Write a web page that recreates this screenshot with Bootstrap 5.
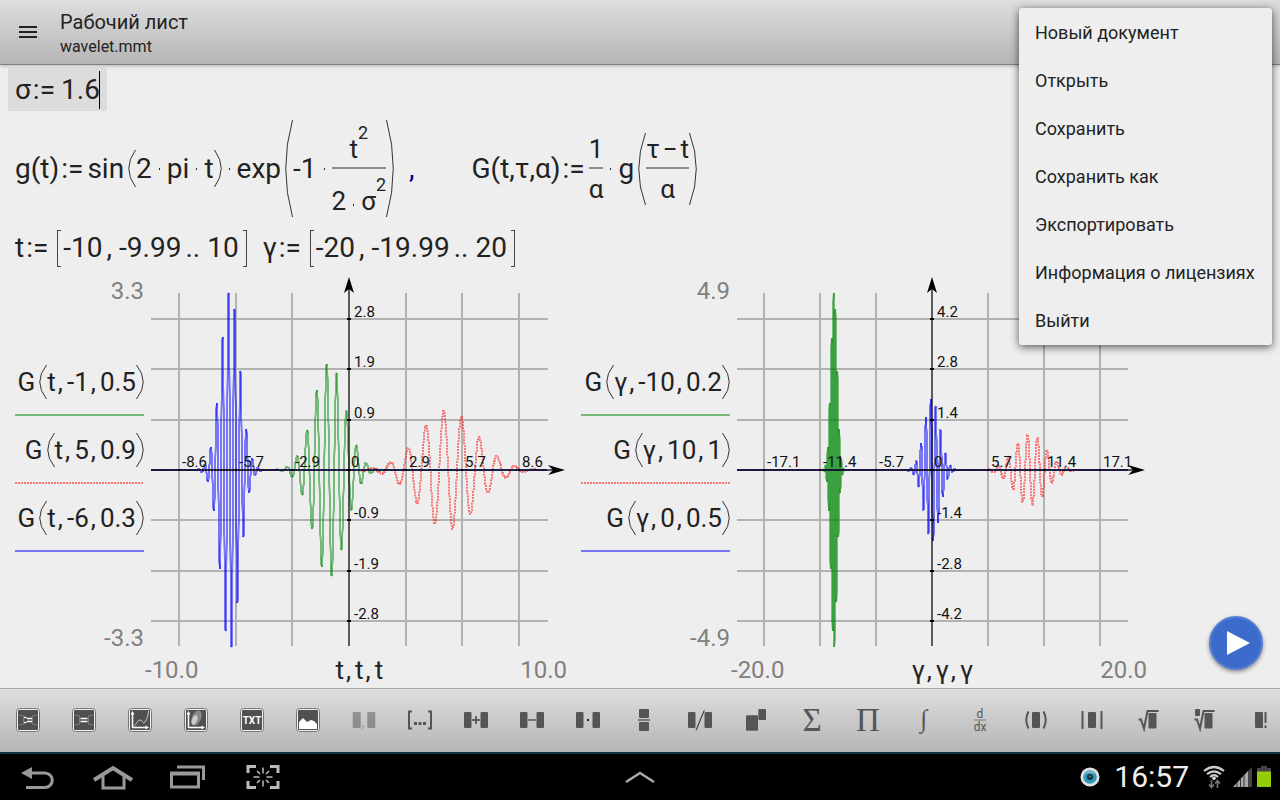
<!DOCTYPE html>
<html lang="ru">
<head>
<meta charset="utf-8">
<meta name="viewport" content="width=device-width, initial-scale=1">
<title>Рабочий лист</title>
<link href="https://cdn.jsdelivr.net/npm/bootstrap@5.3.0/dist/css/bootstrap.min.css" rel="stylesheet">
<style>
body{font-family:Roboto,"Open Sans",sans-serif;background:#eee;color:#222}
button{border:0;background:none;padding:0;color:inherit}
svg{display:block;flex:none;overflow:visible}
.bar-grad{background:linear-gradient(#dedede,#b5b5b5)}
.app-head{height:65px;border-bottom:1px solid #808080;box-shadow:0 1px 4px rgba(0,0,0,.25);padding-left:16px}
.app-title{font-size:20px;line-height:24px;padding-top:5px}
.app-sub{font-size:16px;line-height:25px}
.app-menu{width:253px;padding:1px 0 0;border:0;border-radius:3px;background:#eee;box-shadow:0 2px 8px rgba(0,0,0,.65);top:8px;right:8px;z-index:10}
.app-menu .dropdown-item{font-size:18px;line-height:48px;padding:0 16px;color:#222}
.sheet{padding:1px 8px 0}
.math{font-size:28px;line-height:28px;white-space:nowrap}
.math>*{flex:none}
.edit-box{background:#dcdcdc;height:45px;padding:2px 7px 0}
.edit-box input{width:38px;height:38px;border:0;padding:0;background:none;color:inherit;font:inherit;outline:0}
.caret{width:1px;height:38px;background:#000}
.formula{height:97px;margin-top:9px;padding:0 7px}
.ranges{height:38px;margin-top:12px;padding:0 7px}
.asg{margin:0 4px 0 2px}
.edit-box .asg{margin-right:6px}
.cdot{width:15px;display:flex;justify-content:center}
.cdot::before{content:"";width:1px;height:2px;background:#222}
.par{width:8px;height:97px;fill:none;stroke:#333;align-self:center}
.par path{vector-effect:non-scaling-stroke}
.par-s{height:37px}
.par-l{height:34px}
.par-f{height:72px}
.brk{width:4px;height:37px;border:1px solid #444}
.brk-l{border-right:0;margin:0 2px 0 5px}
.brk-r{border-left:0;margin-left:4px}
.sep{color:#00008b;margin:0 57px 0 15px}
.fraction{font-size:26px;line-height:26px;padding:4px 0}
.fr-num{padding-bottom:5px;border-bottom:2px solid #8c8c8c}
.fr-den{padding-top:7px}
.expo{font-size:18px;line-height:18px;margin-bottom:20px}
.minus{margin:0 3px}
.plots{margin-top:10px;gap:16px;padding-left:7px}
.legend{font-size:26px;line-height:26px;width:129px}
.legend.wide{width:149px}
.lg-item{height:68px;justify-content:flex-end;border-bottom:2px solid}
.lg-item>div{height:66px;padding-top:2px}
.green{border-color:#76ba7b}
.blue{border-color:#7777f7}
.red{border-color:transparent;background:repeating-linear-gradient(90deg,#f87a7a 0 2px,transparent 2px 3px) left bottom/100% 2px no-repeat border-box}
.lg-group{margin-top:43px}
.cm{margin:0 4px 0 2px}
.ranges .cm{margin:0 7px 0 4px}
.lim{font-size:24px;line-height:28px;color:#808080}
.axis-row{font-size:26px;line-height:28px;margin:4px -2px 0 130px}
.axis-row.wide{margin-left:150px}
.chart{margin-left:7px}
.chart text{font-size:15px;fill:#111}
.fab{width:54px;height:54px;border-radius:50%;background:#3d6bcb;box-shadow:0 2px 4px rgba(0,0,0,.4);right:17px;bottom:18px;border:2px solid #5480d4}
.tools{height:64px;border-top:1px solid #aaa;overflow:hidden}
.tools button{width:56px;height:62px;flex:none;display:flex;align-items:center;justify-content:center}
.tools text{font-family:"Liberation Serif",serif;fill:#555}
.tools text.sans{font-family:Roboto,sans-serif}
.sysbar{height:48px;background:#000;border-top:2px solid #0e3444}
.sysbar button{width:75px;height:46px;display:flex;align-items:center;justify-content:center}
.side{flex:1 1 0}
.clock{font-size:30px;line-height:46px;color:#eee;margin:0 14px}
</style>
</head>
<body>
<div class="d-flex flex-column min-vh-100 position-relative overflow-hidden">
<header class="app-head bar-grad d-flex align-items-center flex-shrink-0">
  <button type="button" aria-label="Меню"><svg width="24" height="24" viewBox="0 0 24 24"><path d="M3 7h18M3 12h18M3 17h18" stroke="#222" stroke-width="2"/></svg></button>
  <div class="ms-3 ps-1">
    <div class="app-title">Рабочий лист</div>
    <div class="app-sub">wavelet.mmt</div>
  </div>
  <ul class="dropdown-menu app-menu show">
    <li><a class="dropdown-item" href="#">Новый документ</a></li>
    <li><a class="dropdown-item" href="#">Открыть</a></li>
    <li><a class="dropdown-item" href="#">Сохранить</a></li>
    <li><a class="dropdown-item" href="#">Сохранить как</a></li>
    <li><a class="dropdown-item" href="#">Экспортировать</a></li>
    <li><a class="dropdown-item" href="#">Информация о лицензиях</a></li>
    <li><a class="dropdown-item" href="#">Выйти</a></li>
  </ul>
</header>

<main class="sheet flex-grow-1 position-relative">
  <div class="d-flex">
    <div class="edit-box math d-flex align-items-center">
      <label for="sigma">σ</label><span class="asg">:=</span><input id="sigma" value="1.6"><span class="caret"></span>
    </div>
  </div>

  <div class="formula math d-flex align-items-center">
    <span>g(t)</span><span class="asg">:=</span><span class="me-1">sin</span>
    <svg class="par par-s" viewBox="0 0 8 100" preserveAspectRatio="none"><path d="M7.500 0Q-6 50 7.500 100"/></svg>
    <span>2</span><span class="cdot"></span><span>pi</span><span class="cdot"></span><span>t</span>
    <svg class="par par-s" viewBox="0 0 8 100" preserveAspectRatio="none"><path d="M.5 0Q14 50 .5 100"/></svg>
    <span class="cdot"></span><span class="me-1">exp</span>
    <svg class="par" viewBox="0 0 8 100" preserveAspectRatio="none"><path d="M7.500 0Q-6 50 7.500 100"/></svg>
    <span>-1</span><span class="cdot"></span>
    <div class="fraction d-flex flex-column">
      <div class="fr-num d-flex justify-content-center align-items-end"><span>t</span><span class="expo">2</span></div>
      <div class="fr-den d-flex align-items-end"><span>2</span><span class="cdot align-self-end mb-2"></span><span>σ</span><span class="expo">2</span></div>
    </div>
    <svg class="par" viewBox="0 0 8 100" preserveAspectRatio="none"><path d="M.5 0Q14 50 .5 100"/></svg>
    <span class="sep">,</span>
    <span>G(t,τ,α)</span><span class="asg">:=</span>
    <div class="fraction d-flex flex-column text-center"><div class="fr-num">1</div><div class="fr-den">α</div></div>
    <span class="cdot"></span><span class="me-1">g</span>
    <div class="d-flex">
      <svg class="par par-f" viewBox="0 0 8 100" preserveAspectRatio="none"><path d="M7.500 0Q-6 50 7.500 100"/></svg>
      <div class="fraction text-center"><div class="fr-num">τ<span class="minus">−</span>t</div><div class="fr-den">α</div></div>
      <svg class="par par-f" viewBox="0 0 8 100" preserveAspectRatio="none"><path d="M.5 0Q14 50 .5 100"/></svg>
    </div>
  </div>

  <div class="ranges math d-flex align-items-center">
    <span>t</span><span class="asg">:=</span><span class="brk brk-l"></span><span>-10</span><span class="cm">,</span><span>-9.99</span><span class="cm">..</span><span>10</span><span class="brk brk-r me-3"></span>
    <span>γ</span><span class="asg">:=</span><span class="brk brk-l"></span><span>-20</span><span class="cm">,</span><span>-19.99</span><span class="cm">..</span><span>20</span><span class="brk brk-r"></span>
  </div>

  <div class="plots d-flex">
    <section>
      <div class="d-flex">
        <div class="legend d-flex flex-column" data-legend="green|t|-1|0.5;red|t|5|0.9;blue|t|-6|0.3" data-lim="3.3"></div>
        <svg class="chart" width="414" height="375" data-ox="198" data-sx="19.83" data-gx="56.67" data-w="397" data-max="3.28" data-range="10" data-xl="2.9,5.7,8.6" data-yl="0.9,1.9,2.8" data-curves="-1,0.5,#008806;5,0.9,#f00;-6,0.3,#00f"></svg>
      </div>
      <div class="axis-row d-flex justify-content-between"><span class="lim">-10.0</span><span>t<span class="cm">,</span>t<span class="cm">,</span>t</span><span class="lim">10.0</span></div>
    </section>
    <section>
      <div class="d-flex">
        <div class="legend wide d-flex flex-column" data-legend="green|γ|-10|0.2;red|γ|10|1;blue|γ|0|0.5" data-lim="4.9"></div>
        <svg class="chart" width="408" height="375" data-ox="195" data-sx="9.8" data-gx="56" data-w="391" data-max="4.92" data-range="20" data-xl="5.7,11.4,17.1" data-yl="1.4,2.8,4.2" data-curves="-10,0.2,#008806;10,1,#f00;0,0.5,#00f"></svg>
      </div>
      <div class="axis-row wide d-flex justify-content-between"><span class="lim">-20.0</span><span>γ<span class="cm">,</span>γ<span class="cm">,</span>γ</span><span class="lim">20.0</span></div>
    </section>
  </div>
  <button type="button" class="fab position-absolute d-flex align-items-center justify-content-center" aria-label="Вычислить"><svg width="28" height="26" viewBox="0 0 28 26"><path d="M5 1 28 13 5 25z" fill="#fff"/></svg></button>
</main>

<div class="tools bar-grad d-flex flex-shrink-0" role="toolbar" id="tools"></div>

<nav class="sysbar d-flex flex-shrink-0 align-items-center">
  <div class="side d-flex">
    <button type="button" aria-label="Назад"><svg width="34" height="26" viewBox="0 0 34 26"><path d="M0 9 11 3v12z" fill="#999"/><path d="M10 9h14a7.200 7.200 0 0 1 0 14.500H5" fill="none" stroke="#999" stroke-width="3"/></svg></button>
    <button type="button" aria-label="Домой"><svg width="40" height="26" viewBox="0 0 40 26"><path d="M1 16 20 4l19 12" fill="none" stroke="#999" stroke-width="4"/><path d="M10 12v12h21V12" fill="none" stroke="#999" stroke-width="3"/></svg></button>
    <button type="button" aria-label="Недавние"><svg width="36" height="26" viewBox="0 0 36 26"><path d="M1.500 9.500h27v13.500h-27z" fill="none" stroke="#999" stroke-width="3"/><path d="M0 9.500h30" stroke="#999" stroke-width="4"/><path d="M7 3h26.500v13" fill="none" stroke="#999" stroke-width="3"/></svg></button>
    <button type="button" aria-label="Снимок экрана"><svg width="34" height="26" viewBox="0 0 34 26"><g fill="none" stroke="#bbb"><path d="M2 9V2.500h8M24 2.500h8V9M32 17v6.500h-8M10 23.500H2V17" stroke-width="3"/><path d="M7.500 13h6M20.500 13h6M17 3.500v6M17 16.500v6M11 7l3 3M23 7l-3 3M11 19l3-3M23 19l-3-3" stroke-width="1.500"/></g></svg></button>
  </div>
  <button type="button" aria-label="Развернуть"><svg width="30" height="12" viewBox="0 0 30 12"><path d="M1 11 15 2l14 9" fill="none" stroke="#aaa" stroke-width="2.500"/></svg></button>
  <div class="side d-flex align-items-center justify-content-end">
    <svg width="20" height="20" viewBox="0 0 20 20"><circle cx="10" cy="10" r="9.500" fill="#e4e0e4"/><circle cx="10" cy="10" r="6.800" fill="#2c9ab8"/><path d="M4 8a6.500 6.500 0 0 1 12 0 9 9 0 0 0-12 0" fill="#8ab8c8"/><circle cx="10" cy="10" r="3" fill="#15323f"/><circle cx="10" cy="9.500" r="1" fill="#789"/></svg>
    <time class="clock">16:57</time>
    <svg width="22" height="24" viewBox="0 0 22 24"><g fill="none" stroke="#ccc" stroke-width="2.200"><path d="M1 6Q11-2 21 6M4 9.200Q11 3.500 18 9.200M7 12Q11 8.500 15 12"/></g><path d="M8.500 13q2.500-2 5 0L11 15.500z" fill="#ddd"/><path d="M8.500 15v7M6 19.500l2.500 3 2.500-3M14.500 23v-7M12 18.500l2.500-3 2.500 3" fill="none" stroke="#777" stroke-width="1.600"/></svg>
    <svg class="ms-2" width="19" height="22" viewBox="0 0 19 22"><path d="M0 21 15 5v16z" fill="#aaa"/><path d="M15 5l4-4v20h-4z" fill="#444"/><path d="M4 21v-5M7.500 21v-9M11 21V8" stroke="#333"/></svg>
    <svg class="ms-1 me-2" width="16" height="22" viewBox="0 0 16 22"><path d="M5 0h6v2h4v5H1V2h4z" fill="#444"/><path d="M1 5.500h14V21H1z" fill="#94cc0a"/></svg>
  </div>
</nav>
</div>

<script src="https://cdn.jsdelivr.net/npm/bootstrap@5.3.0/dist/js/bootstrap.bundle.min.js"></script>
<script>
// Legends
const par = d => `<svg class="par par-l" viewBox="0 0 8 100" preserveAspectRatio="none"><path d="${d}"/></svg>`;
document.querySelectorAll('[data-legend]').forEach(el => {
  const rows = el.dataset.legend.split(';').map(s => {
    const [color, v, tau, a] = s.split('|');
    return `<div class="lg-item d-flex ${color}"><div class="d-flex align-items-center"><span class="me-1">G</span>${par('M7.500 0Q-6 50 7.500 100')}<span>${v}</span><span class="cm">,</span><span>${tau}</span><span class="cm">,</span><span>${a}</span>${par('M.5 0Q14 50 .5 100')}</div></div>`;
  }).join('');
  el.innerHTML = `<div class="lim text-end">${el.dataset.lim}</div><div class="lg-group">${rows}</div><div class="lim text-end mt-auto">-${el.dataset.lim}</div>`;
});

// Wavelet charts
const SIGMA = 1.6;
const g = t => Math.sin(2 * Math.PI * t) * Math.exp(-t * t / (2 * SIGMA * SIGMA));
document.querySelectorAll('.chart').forEach(el => {
  const d = el.dataset, ox = +d.ox, oy = 193, sx = +d.sx, gx = +d.gx, gy = 50.4, sy = 176.5 / d.max;
  let grid = '', ticks = '', labels = '', curves = '';
  const xl = d.xl.split(','), yl = d.yl.split(',');
  for (let i = -3; i <= 3; i++) {
    const x = Math.round(ox + i * gx), y = Math.round(oy - i * gy);
    ticks += `M${x - 1} ${oy}h2M${ox - 2} ${y}h4`;
    if (!i) continue;
    grid += `M${x} 16V369M0 ${y}H${d.w}`;
    const s = i < 0 ? '-' : '', k = Math.abs(i) - 1;
    labels += `<text x="${x + 3}" y="${oy - 3}">${s}${xl[k]}</text><text x="${ox + 5}" y="${y - 2}">${s}${yl[k]}</text>`;
  }
  labels += `<text x="${ox + 2}" y="${oy - 3}">0</text>`;
  // each rising or falling run is its own stroke, so dense runs overlap and darken
  d.curves.split(';').forEach(c => {
    const [tau, a, color] = c.split(',');
    const dash = color === '#f00' ? ' stroke-dasharray="2 1"' : '';
    let pts = [], dir = 0, lx = null, ly = null;
    const flush = () => { if (pts.length > 1) curves += `<polyline points="${pts.join(' ')}" stroke="${color}"${dash}/>`; };
    for (let i = -d.range * 100; i <= d.range * 100; i++) {
      const t = i / 100, x = Math.max(0, Math.min(+d.w, Math.round(ox + t * sx))), y = Math.round(oy - sy * g((tau - t) / a) / a);
      if (x === lx && y === ly) continue;
      const nd = ly === null ? 0 : Math.sign(y - ly);
      if (nd && dir && nd !== dir && !dash) { flush(); pts = [`${lx},${ly}`]; }
      if (nd) dir = nd;
      pts.push(`${x},${y}`); lx = x; ly = y;
    }
    flush();
  });
  const r = +d.w;
  el.innerHTML = `<path d="${grid}" stroke="#000" stroke-opacity=".25" stroke-width="2"/>
    <g fill="none" stroke-opacity=".5" stroke-width="2">${curves}</g>
    <path d="M0 ${oy}H${r + 8}M${ox} 8V369" stroke="#000" stroke-opacity=".62" stroke-width="2"/>
    ${labels}
    <path d="${ticks}" stroke="#000" stroke-width="2"/>
    <path d="M${ox} 0l5 16-5-4-5 4zM${r + 17} ${oy}l-17-5 5 5-5 5z" fill="#000"/>`;
});

// Operator toolbar
const blk = (x, y, w, h) => `<rect x="${x}" y="${y}" width="${w}" height="${h}" rx="1" fill="#555"/>`;
const pair = blk(0, 4, 7.5, 16) + blk(16.5, 4, 7.5, 16);
const frame = s => `<rect x=".5" y=".5" width="23" height="23" rx="3" fill="#eee" stroke="#777"/><rect x="2" y="2" width="20" height="20" rx="1" fill="#505050"/>${s}`;
const axes = '<path d="M4.500 20V5M4 19.500h15" stroke="#fff" stroke-width="1.500"/><path d="M2.500 6.500l2-3.500 2 3.500zM17.500 17.500l3.500 2-3.500 2z" fill="#fff"/>';
const tools = [
  ['Присваивание', frame('<path d="M2.500 7.500h5v9h-5M21.500 7.500h-5v9h5" fill="none" stroke="#7a7a7a"/><path d="M11 10.500h5M11 13.500h5M8 9.500h2.500M8 14.500h2.500" stroke="#fff" stroke-width="1.600"/>')],
  ['Результат', frame('<path d="M2.500 7.500h5v9h-5M21.500 7.500h-5v9h5" fill="none" stroke="#7a7a7a"/><path d="M8.500 10.500h7M8.500 13.500h7" stroke="#fff" stroke-width="1.600"/>')],
  ['График', frame(axes + '<path d="M6 18c3-2 3-6 6-6s3 5 5 2 3-6 3.500-11" fill="none" stroke="#ccc"/>')],
  ['Поверхность', frame('<ellipse cx="12.500" cy="10" rx="4.500" ry="8" transform="rotate(22 12.500 10)" fill="#888"/><ellipse cx="10.500" cy="12" rx="2.500" ry="5" transform="rotate(22 10.500 12)" fill="#ccc"/>' + axes)],
  ['Текст', frame('<text class="sans" x="12" y="15.500" font-size="10" font-weight="700" text-anchor="middle" style="fill:#fff">TXT</text>')],
  ['Изображение', frame('<path d="M3 21v-7l4-4 4 4 4-2 3 1 3 3v5z" fill="#fff"/>')],
  ['Разделитель', '<g opacity=".5">' + blk(.7, 4, 8, 16) + blk(15.3, 4, 8, 16) + '<path d="M11 17v2l-1 2" stroke="#555" fill="none"/></g>'],
  ['Интервал', '<path d="M4 3.500H1v17h3M20 3.500h3v17h-3" fill="none" stroke="#555" stroke-width="2"/><path d="M6 15.500h3M10.500 15.500h3M15 15.500h3" stroke="#555" stroke-width="3"/>'],
  ['Сложение', pair + '<path d="M8 12h8M12 8v8" stroke="#444" stroke-width="1.500"/>'],
  ['Вычитание', pair + '<path d="M8 12h8" stroke="#555" stroke-width="1.500"/>'],
  ['Умножение', pair + '<path d="M11 12h2" stroke="#222" stroke-width="2"/>'],
  ['Дробь', blk(7, 1, 10, 9) + blk(7, 14, 10, 9) + '<path d="M6 12h12" stroke="#777" stroke-width="2"/>'],
  ['Деление', pair + '<path d="M16.300 2.300 8 22.300" stroke="#222"/>'],
  ['Степень', blk(2, 7.300, 12, 15.500) + blk(14.300, 1, 7.700, 11)],
  ['Сумма', '<text x="12" y="23" font-size="33" text-anchor="middle">Σ</text>'],
  ['Произведение', '<text x="12" y="23" font-size="33" text-anchor="middle">Π</text>'],
  ['Интеграл', '<text x="12" y="19" font-size="25" font-style="italic" text-anchor="middle">∫</text>'],
  ['Производная', '<text class="sans" x="12" y="10" font-size="12" text-anchor="middle">d</text><text class="sans" x="12" y="23" font-size="12" text-anchor="middle">dx</text><path d="M6 12h12" stroke="#777"/>'],
  ['Скобки', blk(8, 4, 8, 16) + '<path d="M4.500 3.500q-4.500 8.500 0 17M19.500 3.500q4.500 8.500 0 17" fill="none" stroke="#555" stroke-width="2"/>'],
  ['Модуль', blk(8, 4, 8, 16) + '<path d="M2.500 3v18M21.500 3v18" stroke="#555" stroke-width="2"/>'],
  ['Корень', blk(12.500, 5, 8, 15.500) + '<path d="M2.500 11.500h2.500l3 9L11.500 3H22.500" fill="none" stroke="#555" stroke-width="2"/>'],
  ['Корень степени n', blk(12.500, 5, 8, 15.500) + blk(3, 1, 5, 7) + '<path d="M2.500 11.500h2.500l3 9L11.500 3H22.500" fill="none" stroke="#555" stroke-width="2"/>'],
  ['Факториал', blk(7, 4, 8, 16) + '<path d="M17.500 4v11M17.500 17.500v2.500" stroke="#555" stroke-width="2"/>']
];
document.getElementById('tools').innerHTML = tools.map(([n, s]) =>
  `<button type="button" aria-label="${n}"><svg width="24" height="24" viewBox="0 0 24 24">${s}</svg></button>`).join('');
</script>
</body>
</html>
